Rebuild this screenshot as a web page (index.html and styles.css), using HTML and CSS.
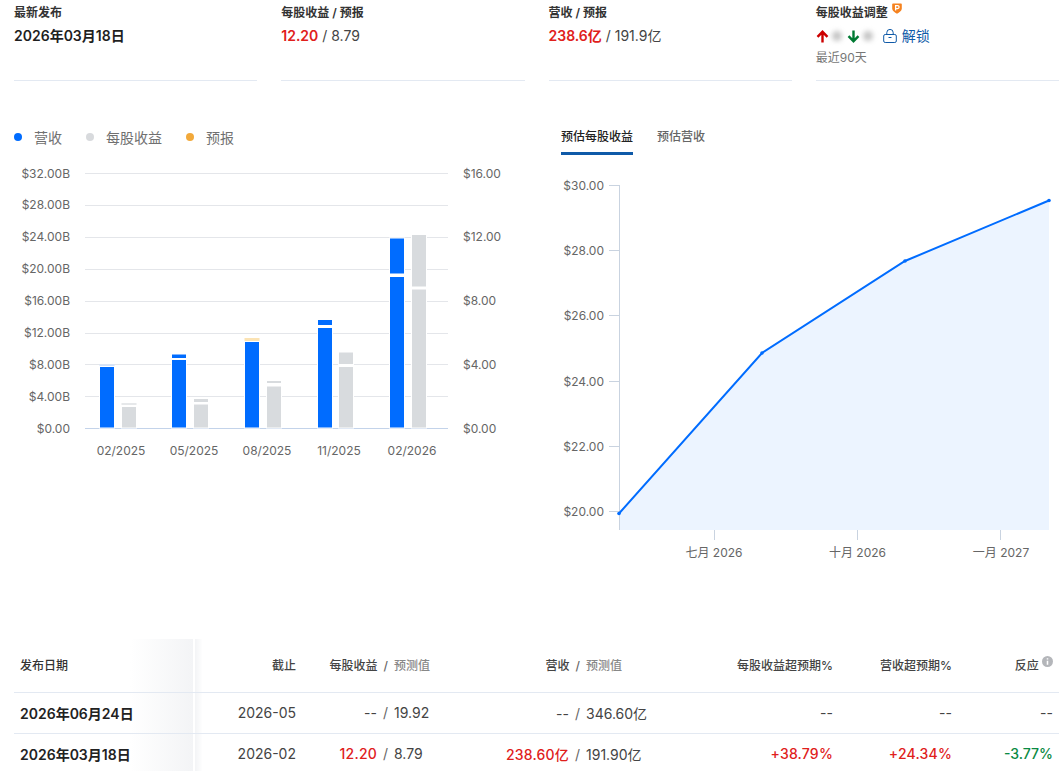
FILE: index.html
```html
<!DOCTYPE html>
<html lang="zh-CN">
<head>
    <meta charset="UTF-8">
    <meta name="viewport" content="width=device-width, initial-scale=1.0">
    <title>财报</title>
    <link rel="stylesheet" href="styles.css">
</head>
<body>
    <div class="stats">
        <div class="stat">
            <div class="stat-label">最新发布</div>
            <div class="stat-value date">2026年03月18日</div>
        </div>
        <div class="stat">
            <div class="stat-label">每股收益 / 预报</div>
            <div class="stat-value"><span class="beat">12.20</span> / 8.79</div>
        </div>
        <div class="stat">
            <div class="stat-label">营收 / 预报</div>
            <div class="stat-value"><span class="beat">238.6亿</span> / 191.9亿</div>
        </div>
        <div class="stat">
            <div class="stat-label">每股收益调整
                <svg class="pro-badge" width="10" height="11" viewBox="0 0 10 11">
                    <path d="M1 0.5h8a0.8 0.8 0 0 1 0.8 0.8v4.5c0 2-2.6 3.9-4.8 4.9C2.800 9.700 0.200 7.800 0.200 5.800V1.300A0.800 0.800 0 0 1 1 0.500z" fill="#f5821f"/>
                    <path d="M3.600 7.600V2.600h2a1.400 1.400 0 0 1 0 3h-2" fill="none" stroke="#fff" stroke-width="1.300"/>
                </svg>
            </div>
            <div class="stat-value revisions">
                <svg class="arrow" width="13" height="13" viewBox="0 0 13 13"><path d="M6.500 12.500V2M1.500 6.800L6.500 1.800 11.500 6.800" fill="none" stroke="#cc0000" stroke-width="2.400"/></svg>
                <span class="blurred"></span>
                <svg class="arrow" width="13" height="13" viewBox="0 0 13 13"><path d="M6.500 0.500V11M1.500 6.200L6.500 11.200 11.500 6.200" fill="none" stroke="#007a33" stroke-width="2.400"/></svg>
                <span class="blurred"></span>
                <span class="unlock">
                    <svg class="lock" width="14" height="14" viewBox="0 0 14 14">
                        <rect x="0.700" y="5.500" width="12.600" height="8" rx="1.500" fill="none" stroke="#0f5aa8" stroke-width="1"/>
                        <path d="M3.800 5.500V3.600a3.200 3.200 0 0 1 6.400 0v1.900M5.500 8.500h3" fill="none" stroke="#0f5aa8" stroke-width="1"/>
                    </svg>
                    解锁
                </span>
            </div>
            <div class="stat-note">最近90天</div>
        </div>
    </div>

    <div class="charts">
        <div class="chart-left">
            <div class="legend">
                <span class="legend-item"><i class="dot dot-blue"></i>营收</span>
                <span class="legend-item"><i class="dot dot-gray"></i>每股收益</span>
                <span class="legend-item"><i class="dot dot-orange"></i>预报</span>
            </div>
            <svg class="bar-chart" width="533" height="310" viewBox="14 160 533 310">
                <g class="grid">
                    <path d="M85 173.500H448M85 205.500H448M85 237.500H448M85 269.500H448M85 301.500H448M85 333.500H448M85 364.500H448M85 396.500H448"/>
                </g>
                <path d="M85 428.500H448" stroke="#c3d3ea" fill="none"/>
                <g class="axis-text" text-anchor="end">
                    <text x="70" y="178">$32.00B</text>
                    <text x="70" y="209">$28.00B</text>
                    <text x="70" y="241">$24.00B</text>
                    <text x="70" y="273">$20.00B</text>
                    <text x="70" y="305">$16.00B</text>
                    <text x="70" y="337">$12.00B</text>
                    <text x="70" y="369">$8.00B</text>
                    <text x="70" y="401">$4.00B</text>
                    <text x="70" y="433">$0.00</text>
                </g>
                <g class="axis-text">
                    <text x="463" y="178">$16.00</text>
                    <text x="463" y="241">$12.00</text>
                    <text x="463" y="305">$8.00</text>
                    <text x="463" y="369">$4.00</text>
                    <text x="463" y="433">$0.00</text>
                </g>
                <g class="axis-text" text-anchor="middle">
                    <text x="121" y="455">02/2025</text>
                    <text x="194" y="455">05/2025</text>
                    <text x="267" y="455">08/2025</text>
                    <text x="339" y="455">11/2025</text>
                    <text x="412" y="455">02/2026</text>
                </g>
                <g class="bars-blue">
                    <rect x="99.500" y="366.500" width="15" height="61.500"/>
                    <rect x="171.500" y="354" width="15" height="4.500"/>
                    <rect x="171.500" y="359.500" width="15" height="68.500"/>
                    <rect x="244.500" y="341.500" width="15" height="86.500"/>
                    <rect x="317.500" y="319.500" width="15" height="6"/>
                    <rect x="317.500" y="327.500" width="15" height="100.500"/>
                    <rect x="389.500" y="238" width="15" height="36"/>
                    <rect x="389.500" y="276.500" width="15" height="151.500"/>
                </g>
                <rect class="bar-sliver" x="99.500" y="364.500" width="15" height="1.500" fill="#cfe2fd"/>
                <rect class="bar-sliver" x="244.500" y="338" width="15" height="3" fill="#fbe3b4"/>
                <g class="bars-gray">
                    <rect x="121.500" y="406.500" width="15" height="21.500"/>
                    <rect x="193.500" y="398.500" width="15" height="4"/>
                    <rect x="193.500" y="404" width="15" height="24"/>
                    <rect x="266.500" y="380.500" width="15" height="3"/>
                    <rect x="266.500" y="386" width="15" height="42"/>
                    <rect x="338.500" y="352" width="15" height="12.500"/>
                    <rect x="338.500" y="366.500" width="15" height="61.500"/>
                    <rect x="411.500" y="234.500" width="15" height="52.500"/>
                    <rect x="411.500" y="289" width="15" height="139"/>
                </g>
                <rect class="bar-sliver" x="121.500" y="403" width="15" height="2" fill="#e6e8ea"/>
            </svg>
        </div>
        <div class="chart-right">
            <div class="tabs">
                <span class="tab active">预估每股收益</span>
                <span class="tab">预估营收</span>
            </div>
            <svg class="area-chart" width="501" height="405" viewBox="561 165 501 405">
                <path d="M619 513.500L762 353 905 261 1049 200.500V530H619z" fill="#ecf4ff"/>
                <path d="M619.500 185V530M609 185.500H619M609 250.500H619M609 315.500H619M609 381.500H619M609 446.500H619M609 511.500H619M714.500 530V540M857.500 530V540M1000.500 530V540" stroke="#c9d3e0" fill="none"/>
                <path d="M619 513.500L762 353 905 261 1049 200.500" stroke="#006cff" stroke-width="2" fill="none"/>
                <g fill="#006cff">
                    <circle cx="619" cy="513.500" r="1.800"/>
                    <circle cx="762" cy="353" r="1.800"/>
                    <circle cx="905" cy="261" r="1.800"/>
                    <circle cx="1049" cy="200.500" r="1.800"/>
                </g>
                <g class="axis-text" text-anchor="end">
                    <text x="604" y="190">$30.00</text>
                    <text x="604" y="255">$28.00</text>
                    <text x="604" y="320">$26.00</text>
                    <text x="604" y="386">$24.00</text>
                    <text x="604" y="451">$22.00</text>
                    <text x="604" y="516">$20.00</text>
                </g>
                <g class="axis-text" text-anchor="middle">
                    <text x="714" y="557">七月 2026</text>
                    <text x="857.500" y="557">十月 2026</text>
                    <text x="1001" y="557">一月 2027</text>
                </g>
            </svg>
        </div>
    </div>

    <table class="earnings">
        <colgroup>
            <col class="col-date"><col class="col-end"><col class="col-eps">
            <col class="col-rev"><col class="col-eps-beat"><col class="col-rev-beat"><col class="col-react">
        </colgroup>
        <thead>
            <tr>
                <th>发布日期</th>
                <th>截止</th>
                <th>每股收益<span class="sep">/</span><span class="muted fc-eps">预测值</span></th>
                <th>营收<span class="sep">/</span><span class="muted fc-rev">预测值</span></th>
                <th>每股收益超预期%</th>
                <th>营收超预期%</th>
                <th>反应
                    <svg class="info" width="11" height="11" viewBox="0 0 10 10">
                        <circle cx="5" cy="5" r="5" fill="#b4b6ba"/>
                        <path d="M5 4.300V8M5 2v1.200" stroke="#fff" stroke-width="1.400"/>
                    </svg>
                </th>
            </tr>
        </thead>
        <tbody>
            <tr>
                <td>2026年06月24日</td>
                <td>2026-05</td>
                <td>--<span class="sep">/</span><span class="fc-eps">19.92</span></td>
                <td>--<span class="sep">/</span><span class="fc-rev">346.60亿</span></td>
                <td>--</td>
                <td>--</td>
                <td>--</td>
            </tr>
            <tr>
                <td>2026年03月18日</td>
                <td>2026-02</td>
                <td><span class="beat">12.20</span><span class="sep">/</span><span class="fc-eps">8.79</span></td>
                <td><span class="beat">238.60亿</span><span class="sep">/</span><span class="fc-rev">191.90亿</span></td>
                <td class="beat">+38.79%</td>
                <td class="beat">+24.34%</td>
                <td class="drop">-3.77%</td>
            </tr>
        </tbody>
    </table>
</body>
</html>
```

FILE: styles.css
```css
html, body {
    height: 100%;
    overflow: hidden;
}
body {
    margin: 0;
    background-color: #ffffff;
    color: #333333;
    font-family: Inter, "Noto Sans CJK SC", sans-serif;
}
.stats {
    display: grid;
    grid-template-columns: repeat(4, 1fr);
    gap: 24px;
    height: 81px;
    padding: 0 3px 0 14px;
}
.stat {
    border-bottom: 1px solid #e3e9f2;
}
.stat-label {
    margin-top: 4px;
    font-size: 12px;
    line-height: 18px;
    font-weight: 600;
    color: #333333;
}
.pro-badge {
    position: relative;
    top: -3px;
    margin-left: 1px;
}
.stat-value {
    height: 20px;
    margin-top: 4px;
    font-size: 14px;
    line-height: 20px;
    color: #444444;
}
.date {
    font-weight: 600;
    color: #1f1f1f;
}
.beat {
    color: #e0201b;
    font-weight: 600;
}
.drop {
    color: #0a8a43;
    font-weight: 500;
}
.revisions {
    display: flex;
    align-items: center;
}
.blurred {
    width: 10px;
    height: 10px;
    margin: 0 5px 0 3px;
    border-radius: 50%;
    background-color: #c4c4c4;
    filter: blur(2.5px);
}
.unlock {
    display: inline-flex;
    align-items: center;
    gap: 5px;
    margin-left: 5px;
    color: #0f5aa8;
}
.lock {
    margin-top: -1px;
}
.stat-note {
    margin-top: 3px;
    font-size: 12px;
    line-height: 18px;
    color: #777777;
}
.charts {
    display: flex;
    height: 445px;
    margin-top: 44px;
    padding-left: 14px;
}
.chart-left {
    width: 547px;
}
.chart-right {
    width: 501px;
}
.legend {
    display: flex;
    gap: 24px;
    height: 24px;
    margin-bottom: 11px;
}
.legend-item {
    display: flex;
    align-items: center;
    gap: 12px;
    font-size: 14px;
    color: #707070;
}
.dot {
    width: 8px;
    height: 8px;
    border-radius: 50%;
}
.dot-blue {
    background-color: #006cff;
}
.dot-gray {
    background-color: #d8dadd;
}
.dot-orange {
    background-color: #f2a93b;
}
.bar-chart,
.area-chart {
    display: block;
}
.grid path {
    stroke: #e4e6ea;
    fill: none;
}
.axis-text text {
    font-size: 12px;
    fill: #666666;
}
.bars-blue rect {
    fill: #006cff;
    stroke: #ffffff;
}
.bars-gray rect {
    fill: #d8dbde;
    stroke: #ffffff;
}
.tabs {
    display: flex;
    gap: 24px;
    height: 30px;
    margin-bottom: 10px;
}
.tab {
    height: 27px;
    font-size: 12px;
    line-height: 23px;
    font-weight: 500;
    color: #666666;
}
.tab.active {
    border-bottom: 3px solid #0f5aa8;
    color: #222222;
}
.earnings {
    width: 1045px;
    margin: 69px 0 0 14px;
    border-collapse: collapse;
    table-layout: fixed;
    font-size: 14px;
}
.col-date { width: 188px; }
.col-end { width: 100px; }
.col-eps { width: 134px; }
.col-rev { width: 218px; }
.col-eps-beat { width: 185px; }
.col-rev-beat { width: 119px; }
.col-react { width: 101px; }
.earnings th,
.earnings td {
    padding: 0 6px;
    text-align: right;
    border-bottom: 1px solid #e3e9f2;
    color: #444444;
}
.earnings th {
    height: 53px;
    padding-bottom: 2px;
    box-sizing: border-box;
    font-size: 12px;
    font-weight: 500;
}
.earnings td {
    height: 40px;
}
.earnings th:first-child,
.earnings td:first-child {
    text-align: left;
    background-image: linear-gradient(to right, rgba(243, 244, 246, 0), #f3f4f6), linear-gradient(to right, #f3f4f6, rgba(243, 244, 246, 0));
    background-size: 63px 100%, 8px 100%;
    background-position: 116px 0, 181px 0;
    background-repeat: no-repeat;
}
.earnings td:first-child {
    font-weight: 600;
    color: #222222;
}
.earnings th:first-child {
    color: #333333;
}
.earnings .beat {
    color: #e0201b;
    font-weight: 500;
    letter-spacing: 0.2px;
}
.earnings .drop {
    color: #0a8a43;
}
.sep {
    margin: 0 6px;
    color: #666666;
}
.muted {
    color: #888888;
}
.fc-eps,
.fc-rev {
    display: inline-block;
    text-align: left;
}
.fc-eps {
    width: 36px;
}
.fc-rev {
    width: 62px;
}
.info {
    position: relative;
    top: -3px;
}
```
